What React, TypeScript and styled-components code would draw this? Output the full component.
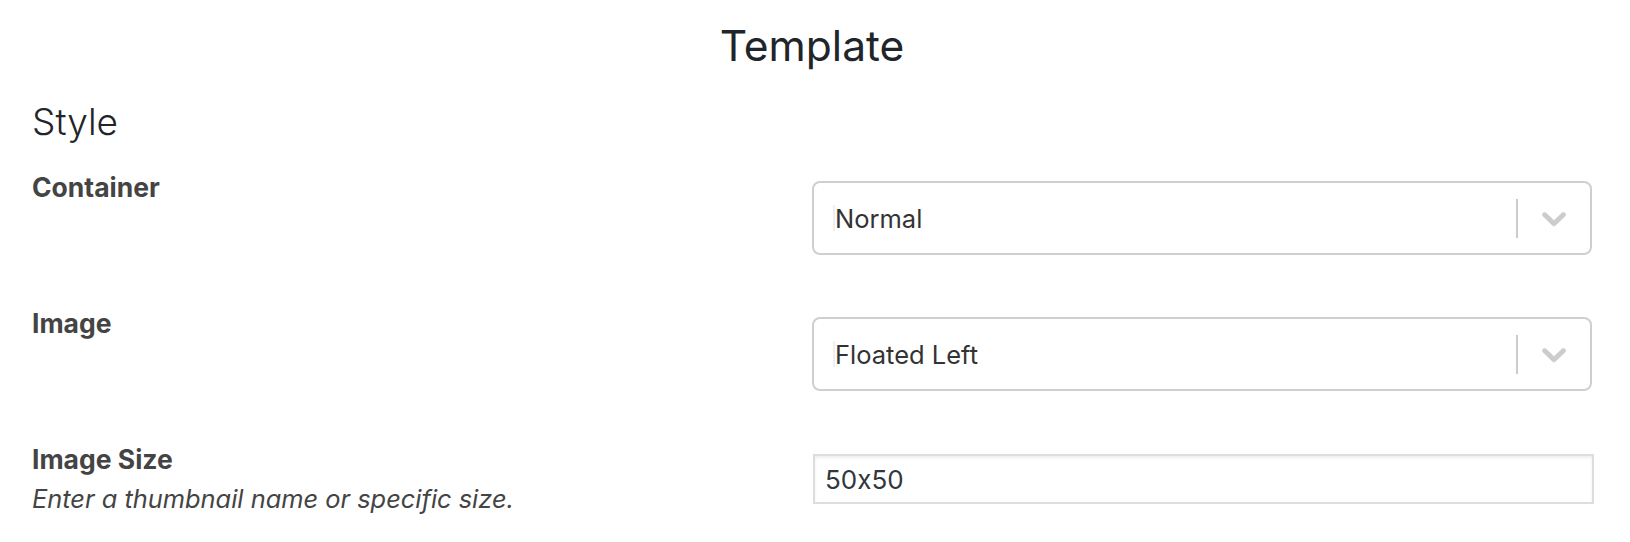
import React from 'react';
import styled, { createGlobalStyle } from 'styled-components';

const GlobalStyle = createGlobalStyle`
    html, body {
        margin: 0;
        padding: 0;
        background: #ffffff;
    }
    body {
        font-family: Inter, "Noto Sans", "Liberation Sans", sans-serif;
        font-feature-settings: "calt" 0;
        color: #212529;
    }
    * {
        box-sizing: border-box;
    }
`

const StyledPage = styled.div`
    padding: 21px 38px 0 32px;
`

const StyledTitle = styled.h1`
    margin: 0;
    font-size: 42.5px;
    line-height: 50px;
    font-weight: 400;
    text-align: center;
    color: #212529;
`

const StyledSectionTitle = styled.h2`
    margin: 29px 0 0;
    font-size: 37px;
    line-height: 44px;
    font-weight: 300;
    color: #212529;
`

const StyledFields = styled.div`
    margin-top: 25px;
    display: flex;
    flex-direction: column;
`

const StyledFieldRow = styled.div`
    display: grid;
    grid-template-columns: 1fr 1fr;
    height: 136px;

    &:last-child {
        height: auto;
    }
`

const StyledLabelCol = styled.div`
    display: flex;
    flex-direction: column;
`

const StyledLabel = styled.label`
    font-size: 26.5px;
    line-height: 36px;
    font-weight: 700;
    color: #444444;
`

const StyledHelp = styled.span`
    margin-top: 4px;
    font-size: 25.4px;
    line-height: 36px;
    font-style: italic;
    color: #444444;
`

const StyledControl = styled.div<{ $offset: number }>`
    padding-top: ${props => props.$offset}px;
`

const StyledSelect = styled.div`
    display: flex;
    align-items: center;
    height: 74px;
    border: 2px solid #cfcfcf;
    border-radius: 8px;
    background: #ffffff;
    cursor: default;
`

const StyledValue = styled.div`
    flex: 1;
    padding-left: 19px;
    font-size: 25.5px;
    color: #333333;
    display: flex;
    align-items: center;

    &::before {
        content: '';
        display: inline-block;
        width: 2px;
        height: 26px;
        background: #efefef;
    }
`

const StyledSeparator = styled.span`
    align-self: center;
    width: 2px;
    height: 39px;
    background: #cccccc;
`

const StyledIndicator = styled.div`
    display: flex;
    align-items: center;
    padding: 0 16px 0 16px;
    color: #cccccc;
`

const StyledInput = styled.input`
    display: block;
    width: calc(100% + 1px);
    margin-left: 1px;
    height: 50px;
    padding: 0 10px;
    border: 2px solid #dddddd;
    border-radius: 0;
    box-shadow: inset 0 2px 3px rgba(0, 0, 0, 0.07);
    font-family: inherit;
    font-feature-settings: "calt" 0;
    font-size: 26px;
    color: #32373c;
    outline: none;
`

const Chevron = () => (
    <svg width="40" height="40" viewBox="0 0 20 20" aria-hidden="true" focusable="false">
        <path
            fill="currentColor"
            stroke="currentColor"
            strokeWidth="0.3"
            d="M4.516 7.548c0.436-0.446 1.043-0.481 1.576 0l3.908 3.747 3.908-3.747c0.533-0.481 1.141-0.446 1.574 0 0.436 0.445 0.408 1.197 0 1.615-0.406 0.418-4.695 4.502-4.695 4.502-0.217 0.223-0.502 0.335-0.787 0.335s-0.57-0.112-0.789-0.335c0 0-4.287-4.084-4.695-4.502s-0.436-1.17 0-1.615z"
        />
    </svg>
)

const Select = ({ value }: { value: string }) => (
    <StyledSelect role="combobox">
        <StyledValue>{value}</StyledValue>
        <StyledSeparator />
        <StyledIndicator>
            <Chevron />
        </StyledIndicator>
    </StyledSelect>
)

const App = () => {
    return (
        <StyledPage>
            <GlobalStyle />
            <StyledTitle>Template</StyledTitle>
            <StyledSectionTitle>Style</StyledSectionTitle>
            <StyledFields>
                <StyledFieldRow>
                    <StyledLabelCol>
                        <StyledLabel>Container</StyledLabel>
                    </StyledLabelCol>
                    <StyledControl $offset={12}>
                        <Select value="Normal" />
                    </StyledControl>
                </StyledFieldRow>
                <StyledFieldRow>
                    <StyledLabelCol>
                        <StyledLabel>Image</StyledLabel>
                    </StyledLabelCol>
                    <StyledControl $offset={12}>
                        <Select value="Floated Left" />
                    </StyledControl>
                </StyledFieldRow>
                <StyledFieldRow>
                    <StyledLabelCol>
                        <StyledLabel>Image Size</StyledLabel>
                        <StyledHelp>Enter a thumbnail name or specific size.</StyledHelp>
                    </StyledLabelCol>
                    <StyledControl $offset={13}>
                        <StyledInput defaultValue="50x50" />
                    </StyledControl>
                </StyledFieldRow>
            </StyledFields>
        </StyledPage>
    );
};

export default App;
